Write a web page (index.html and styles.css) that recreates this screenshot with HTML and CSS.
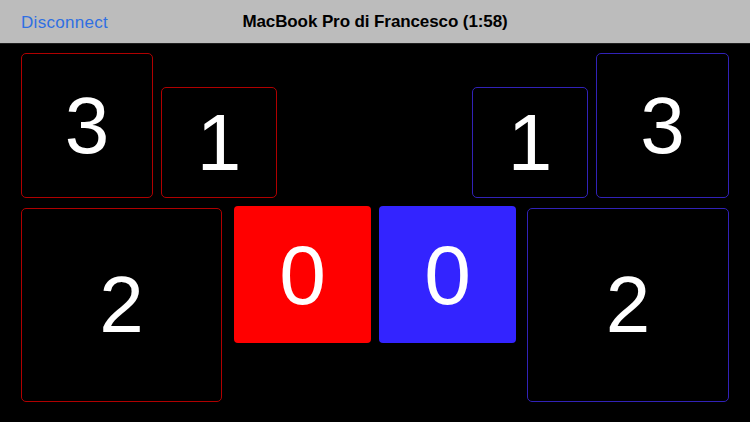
FILE: index.html
```html
<!DOCTYPE html>
<html>
<head>
<meta charset="utf-8">
<link rel="stylesheet" href="styles.css">
</head>
<body>
<div class="nav">
  <span class="nav-btn">Disconnect</span>
  <span class="nav-title">MacBook Pro di Francesco (1:58)</span>
</div>
<div class="row row-top">
  <div class="group">
    <div class="box out-red big-top">3</div>
    <div class="box out-red small-top">1</div>
  </div>
  <div class="group">
    <div class="box out-blue small-top">1</div>
    <div class="box out-blue big-top wide">3</div>
  </div>
</div>
<div class="row row-bottom">
  <div class="box out-red big-bottom">2</div>
  <div class="box fill-red center">0</div>
  <div class="box fill-blue center">0</div>
  <div class="box out-blue big-bottom wide2">2</div>
</div>
</body>
</html>
```
FILE: styles.css
```css
* { box-sizing: border-box; }
html, body { margin: 0; padding: 0; }
body {
  width: 750px;
  height: 422px;
  background: #000;
  font-family: "Liberation Sans", Arial, sans-serif;
  overflow: hidden;
}
.nav {
  position: relative;
  height: 44px;
  background: #bcbcbc;
  border-bottom: 1px solid #1e1e1e;
  display: flex;
  align-items: center;
  justify-content: center;
}
.nav-btn {
  position: absolute;
  left: 21px;
  top: 13px;
  font-size: 17px;
  letter-spacing: 0.3px;
  color: #2f6fe2;
}
.nav-title {
  font-size: 17px;
  font-weight: bold;
  color: #000;
  letter-spacing: -0.1px;
  margin-top: 1px;
}
.row {
  display: flex;
  padding: 0 21px;
}
.row-top {
  margin-top: 9px;
  justify-content: space-between;
  align-items: flex-end;
}
.group {
  display: flex;
  align-items: flex-end;
  gap: 8px;
}
.row-bottom {
  margin-top: 8px;
  align-items: flex-start;
}
.box {
  display: flex;
  align-items: center;
  justify-content: center;
  color: #fff;
  font-size: 80px;
  line-height: 1;
  border-radius: 5px;
}
.out-red { border: 1px solid #b00000; }
.out-blue { border: 1px solid #3122b8; }
.big-top { width: 132px; height: 145px; }
.big-top.wide { width: 133px; }
.small-top { width: 116px; height: 111px; }
.big-bottom { width: 201px; height: 194px; margin-top: 2px; }
.big-bottom.wide2 { width: 202px; margin-left: 11px; }
.center { width: 137px; height: 137px; font-size: 84px; border-radius: 4px; }
.fill-red { background: #ff0000; margin-left: 12px; }
.fill-blue { background: #3324ff; margin-left: 8px; }
```
